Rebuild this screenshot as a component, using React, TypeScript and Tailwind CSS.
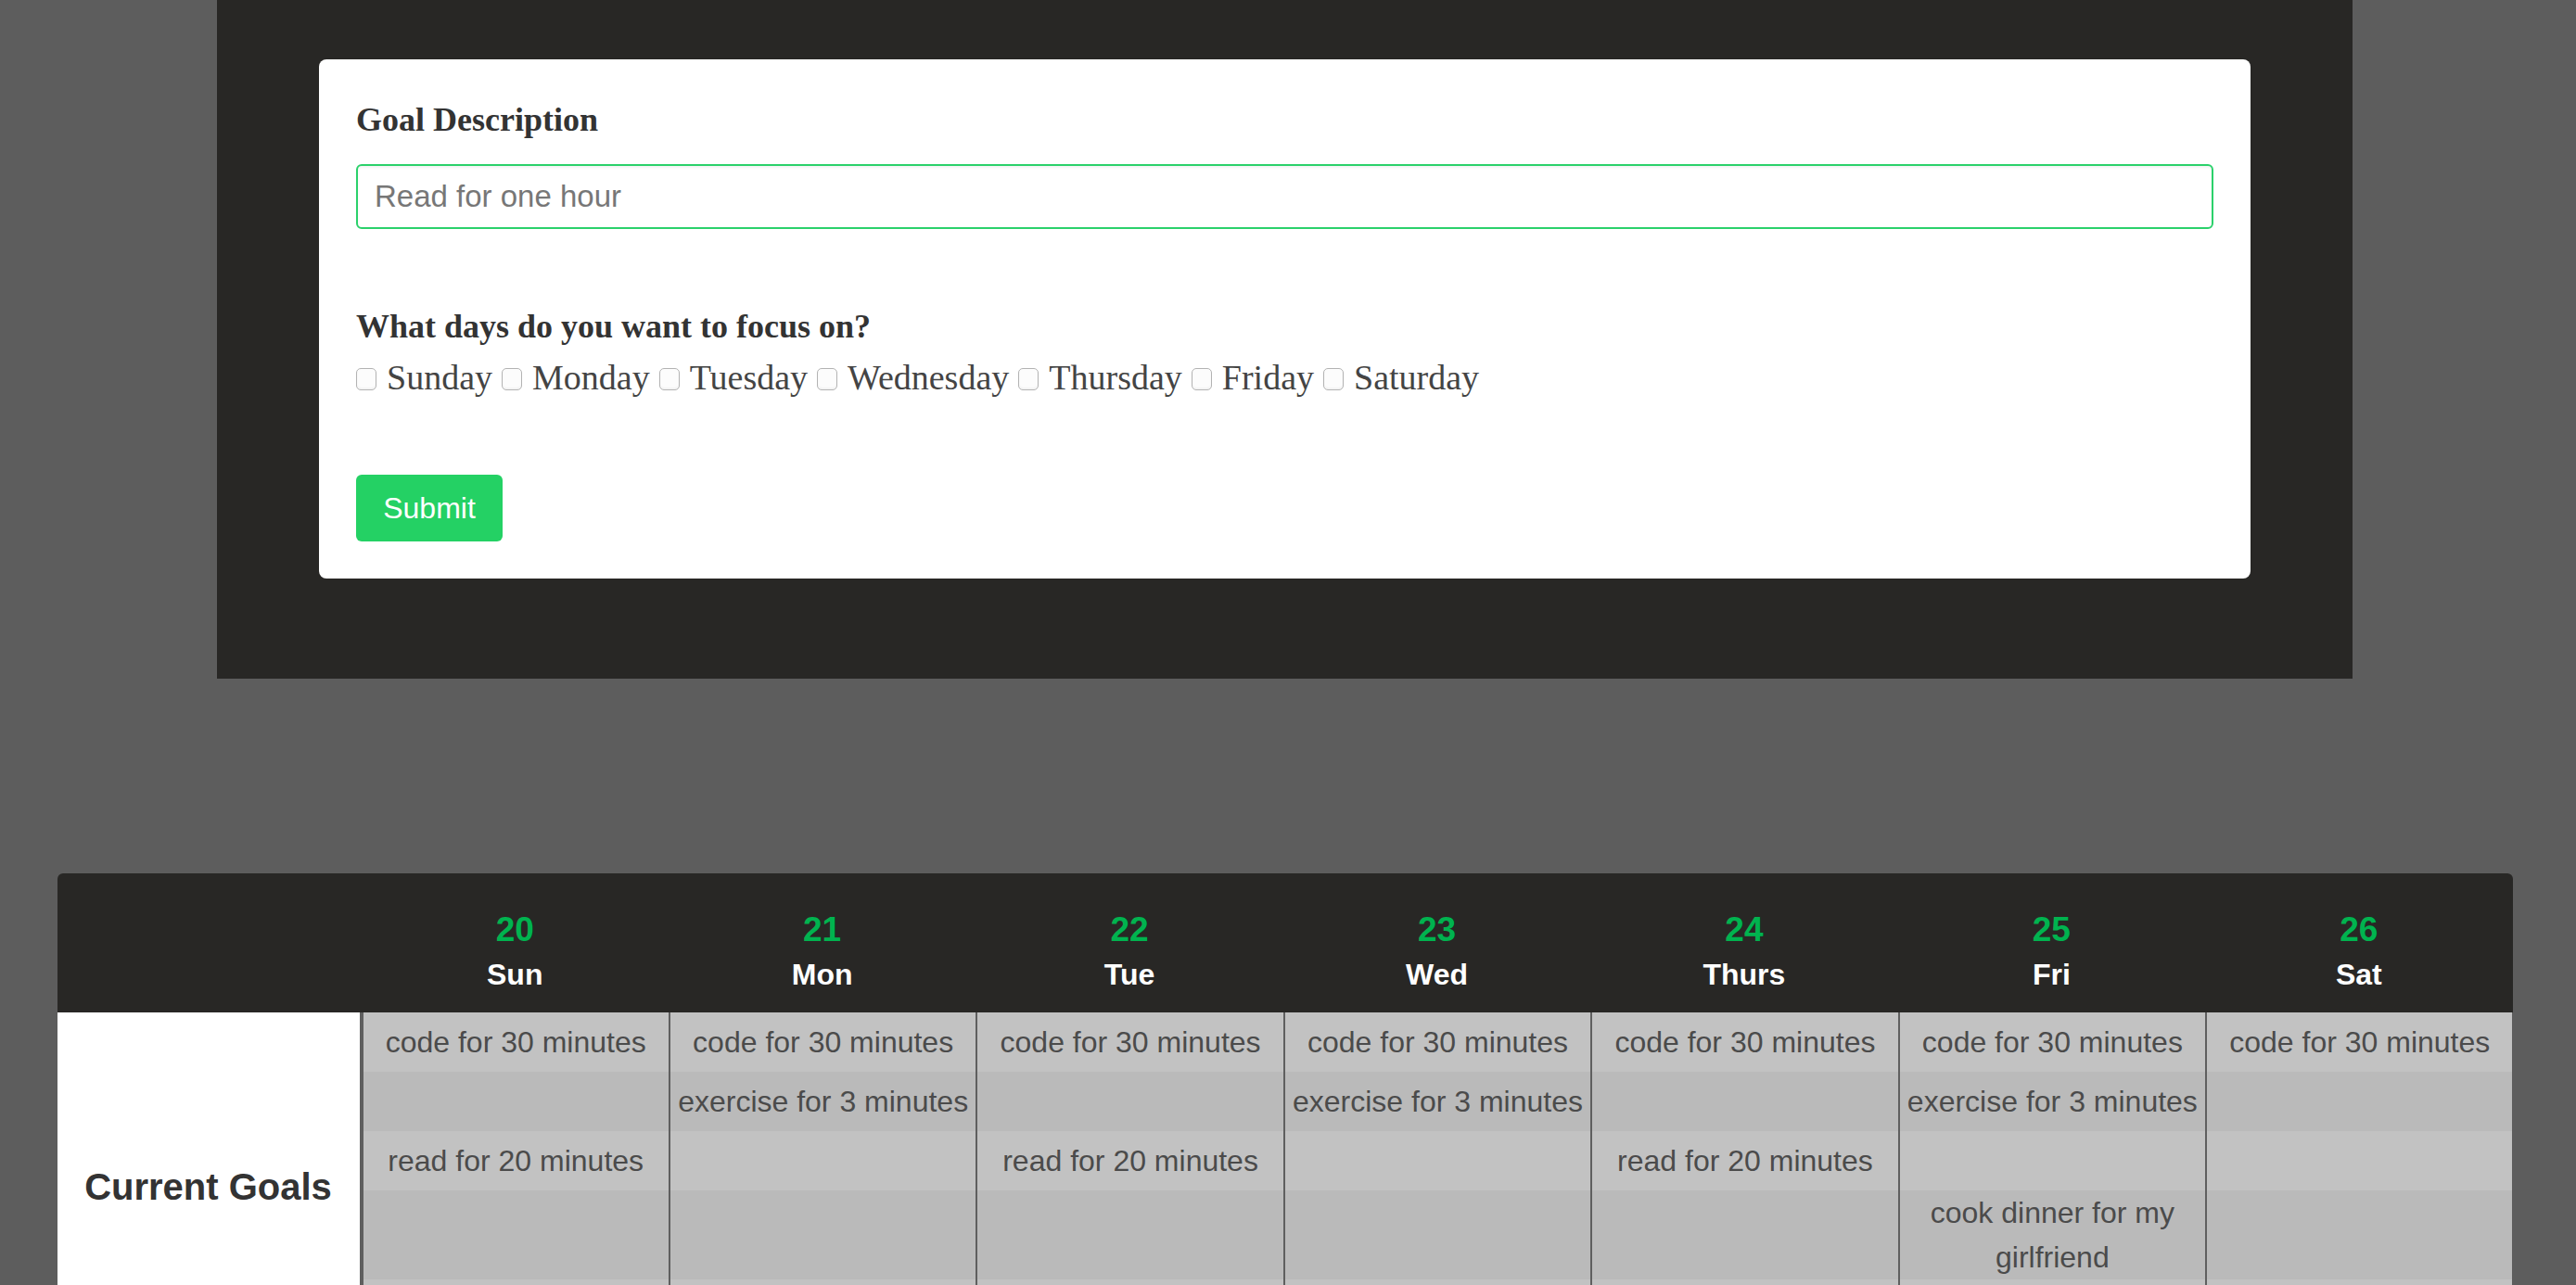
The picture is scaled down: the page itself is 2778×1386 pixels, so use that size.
const focusDays = ["Sunday", "Monday", "Tuesday", "Wednesday", "Thursday", "Friday", "Saturday"];

const week = [
  { num: 20, name: "Sun" },
  { num: 21, name: "Mon" },
  { num: 22, name: "Tue" },
  { num: 23, name: "Wed" },
  { num: 24, name: "Thurs" },
  { num: 25, name: "Fri" },
  { num: 26, name: "Sat" },
];

const code = "code for 30 minutes";
const exercise = "exercise for 3 minutes";
const read = "read for 20 minutes";

// one array per row, one entry per day
const rows: { height: string; bg: string; cells: string[] }[] = [
  { height: "min-h-[64px]", bg: "bg-[#c2c2c2]", cells: [code, code, code, code, code, code, code] },
  { height: "min-h-[64px]", bg: "bg-[#bababa]", cells: ["", exercise, "", exercise, "", exercise, ""] },
  { height: "min-h-[64px]", bg: "bg-[#c2c2c2]", cells: [read, "", read, "", read, "", ""] },
  { height: "min-h-[64px]", bg: "bg-[#bababa]", cells: ["", "", "", "", "", "cook dinner for my girlfriend", ""] },
  { height: "min-h-[88px]", bg: "bg-[#c2c2c2]", cells: ["", "", "", "", "", "", ""] },
];

function GoalForm() {
  return (
    <section className="mx-auto w-[2303px] bg-[#282725] px-[110px] pt-[64px] pb-[108px]">
      <form className="rounded-[8px] bg-white px-[40px] pt-[38px] pb-[40px]" onSubmit={(e) => e.preventDefault()}>
        <label className="block font-['Liberation_Serif',serif] text-[36px] font-bold leading-[54px] text-[#333]">
          Goal Description
        </label>
        <input
          type="text"
          placeholder="Read for one hour"
          className="mt-[21px] block h-[70px] w-full rounded-[6px] border-2 border-[#2bd16b] px-[18px] font-['Liberation_Sans',sans-serif] text-[33px] text-[#333] shadow-[inset_0_2px_3px_rgba(0,0,0,0.05)] outline-none placeholder:text-[#777]"
        />

        <h3 className="mt-[78px] font-['Liberation_Serif',serif] text-[36px] font-bold leading-[54px] text-[#333]">
          What days do you want to focus on?
        </h3>
        <div className="flex flex-wrap items-center gap-x-[10px] font-['Liberation_Serif',serif] text-[38px] leading-[56px] text-[#444]">
          {focusDays.map((d) => (
            <label key={d} className="flex items-center gap-[11px]">
              <input
                type="checkbox"
                className="mt-[4px] h-[24px] w-[22px] appearance-none rounded-[5px] border border-[#b3b3b3] bg-[#fcfcfc] shadow-[inset_0_-2px_2px_rgba(0,0,0,0.04)]"
              />
              {d}
            </label>
          ))}
        </div>

        <button
          type="submit"
          className="mt-[77px] h-[72px] w-[158px] rounded-[6px] bg-[#24d164] font-['Liberation_Sans',sans-serif] text-[32px] text-white"
        >
          Submit
        </button>
      </form>
    </section>
  );
}

function WeekTable() {
  return (
    <div className="mx-auto mt-[210px] w-[2648px] overflow-hidden rounded-t-[6px] font-['Liberation_Sans',sans-serif]">
      <div className="grid h-[150px] grid-cols-[328px_repeat(7,1fr)] bg-[#282725]">
        <div />
        {week.map((d) => (
          <div key={d.name} className="flex flex-col items-center pt-[39px]">
            <span className="text-[37px] font-bold leading-[44px] text-[#00b34f]">{d.num}</span>
            <span className="mt-[6px] text-[32px] font-bold leading-[40px] text-white">{d.name}</span>
          </div>
        ))}
      </div>

      <div className="grid grid-cols-[328px_repeat(7,1fr)]">
        <div className="row-span-5 flex items-center justify-center border-r-2 border-[#5f5f5f] bg-white text-[40px] font-bold text-[#333]">
          Current Goals
        </div>
        {rows.map((row, ri) =>
          row.cells.map((c, ci) => (
            <div
              key={`${ri}-${ci}`}
              className={`${row.bg} ${row.height} flex items-center justify-center border-l-2 border-[#5f5f5f] px-[4px] text-center text-[32px] leading-[48px] text-[#4b4b4b]`}
            >
              {c}
            </div>
          ))
        )}
      </div>
    </div>
  );
}

export default function App() {
  return (
    <div className="min-h-screen bg-[#5d5d5d] pr-[7px] pb-[120px]">
      <GoalForm />
      <WeekTable />
    </div>
  );
}
